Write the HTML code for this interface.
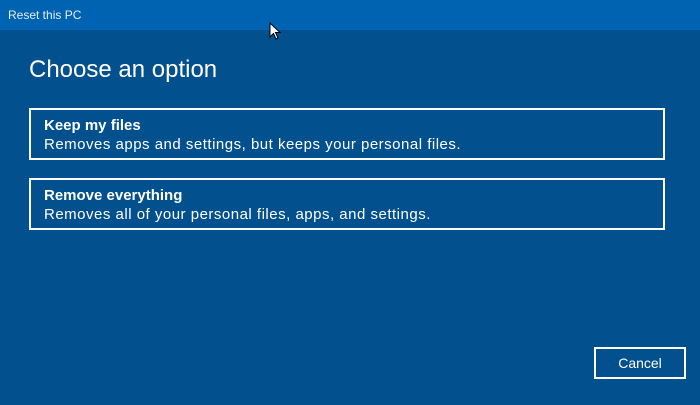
<!DOCTYPE html><html><head><style>
body{margin:0;width:700px;height:405px;background:#02508d;font-family:"Liberation Sans",sans-serif;color:#fff;position:relative;overflow:hidden}
.t{position:absolute;left:0;top:0;width:700px;height:30px;background:#0063b1;font-size:12px;line-height:30px;padding-left:8px;box-sizing:border-box;color:#e8eef6}
h1{position:absolute;left:29px;top:56px;margin:0;font-weight:normal;font-size:24px}
.c{position:absolute;left:29px;width:636px;height:52px;border:2px solid #fff;box-sizing:border-box;padding:7px 0 0 13px}
.c b{display:block;font-size:15px;margin-bottom:2px}
.c span{font-size:15px;letter-spacing:0.5px}
.btn{position:absolute;left:594px;top:347px;width:92px;height:32px;border:2px solid #fff;box-sizing:border-box;text-align:center;line-height:28px;font-size:14px}
</style></head><body>
<div class="t">Reset this PC</div>
<svg style="position:absolute;left:269px;top:22px" width="12" height="18" viewBox="0 0 12 18"><path d="M1 1V15L4.5 11.5L7 17L9 16L6.5 10.5H11Z" fill="#fff" stroke="#000" stroke-width="1"/></svg>
<h1>Choose an option</h1>
<div class="c" style="top:108px"><b>Keep my files</b><span>Removes apps and settings, but keeps your personal files.</span></div>
<div class="c" style="top:178px"><b>Remove everything</b><span>Removes all of your personal files, apps, and settings.</span></div>
<div class="btn">Cancel</div>
</body></html>
